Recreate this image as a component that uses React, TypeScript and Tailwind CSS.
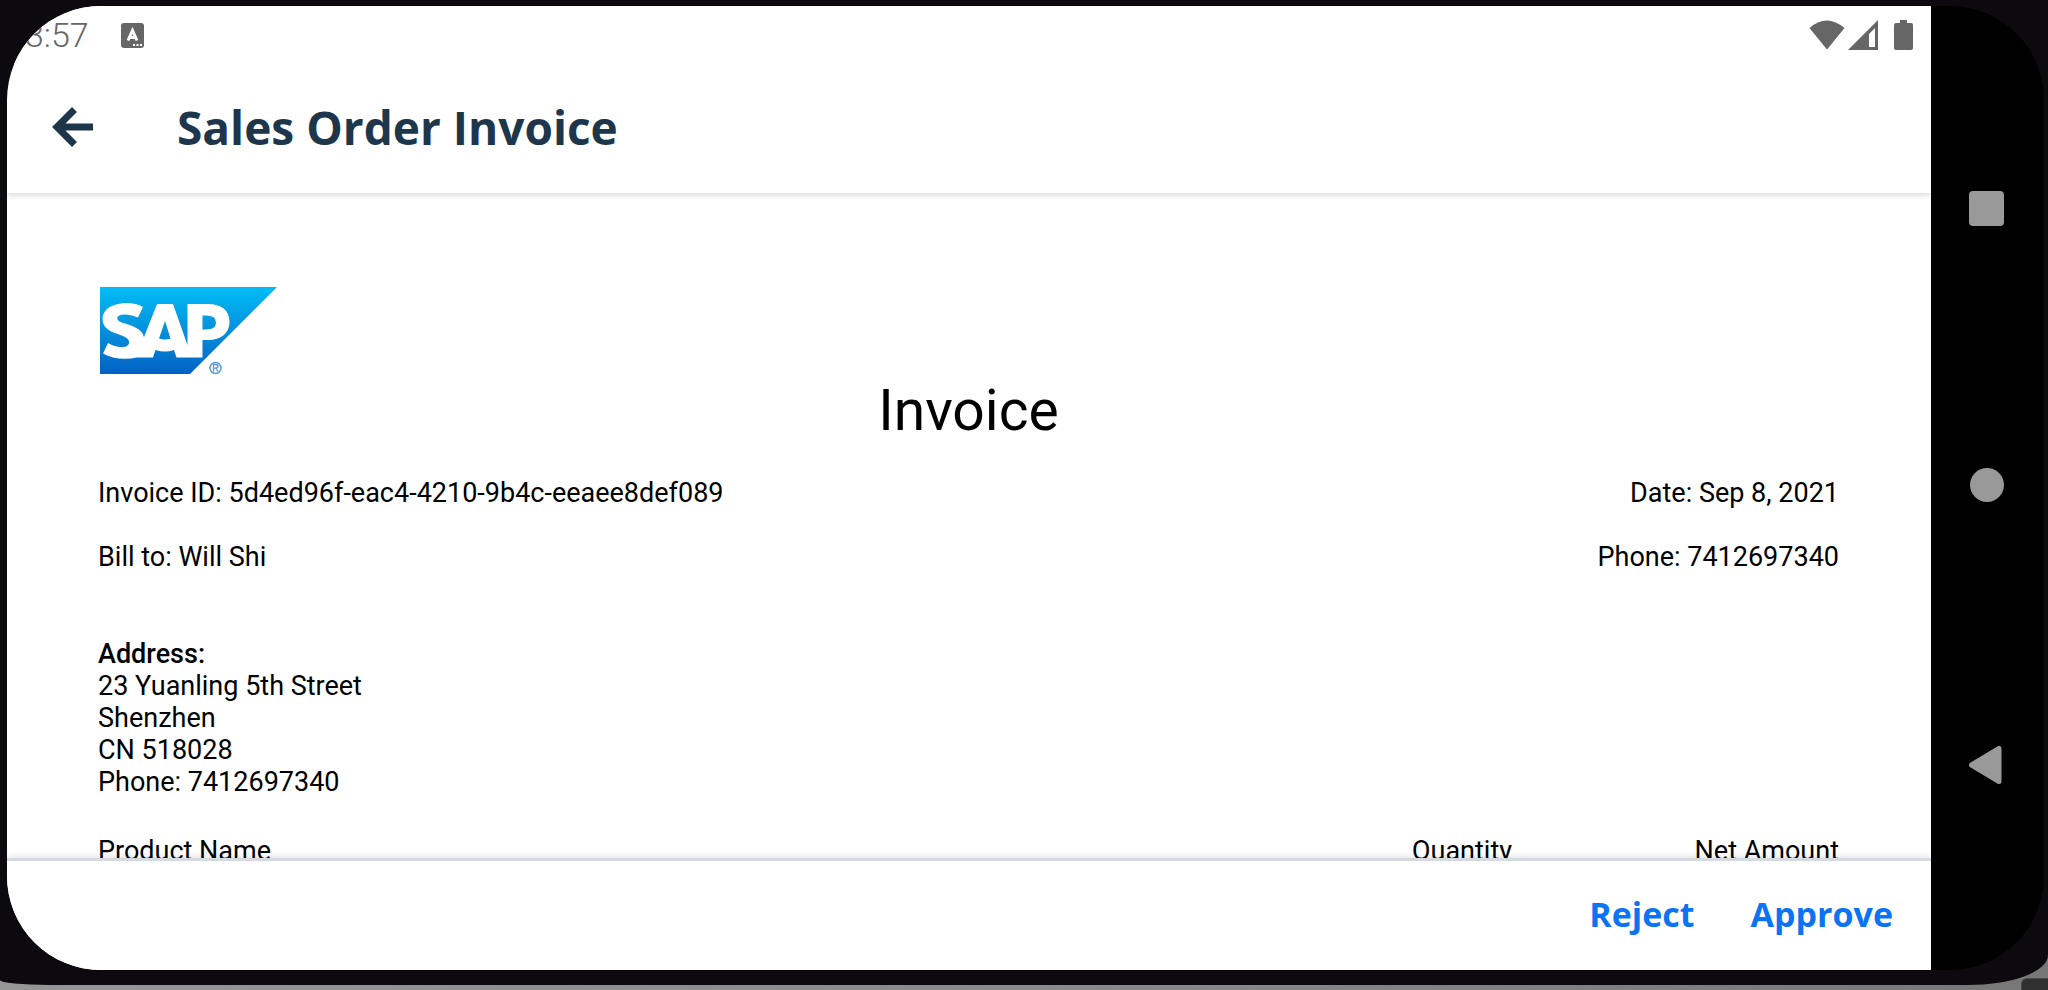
import React from "react";

const invoice = { id: "5d4ed96f-eac4-4210-9b4c-eeaee8def089" };

function StatusBar() {
  return (
    <div className="relative z-20 flex h-[58px] shrink-0 items-center bg-white px-[18px] text-[#666666]">
      <span className="text-[34px] leading-none font-light">3:57</span>
      <svg className="ml-8" width="23" height="25" viewBox="0 0 23 25" aria-hidden="true">
        <rect width="23" height="25" rx="3" fill="#666" />
        <path d="M7 17.500 11.500 7.500 16 17.500M8.600 14.500h5.800" fill="none" stroke="#fff" strokeWidth="3" />
        <path d="M12 21h2v2h-2zM15.500 21h2v2h-2zM19 21h2v2h-2z" fill="#fff" />
      </svg>
      <div className="ml-auto flex items-center">
        <svg width="36" height="30" viewBox="0 0 36 30" aria-hidden="true">
          <path d="M.5 8Q17.500-7 35.500 8L18 29.500z" fill="#666" />
        </svg>
        <svg className="ml-[3px]" width="30" height="30" viewBox="0 0 30 30" aria-hidden="true">
          <path fillRule="evenodd" d="M30 0v30H0zM27 8l-6 6v13h6z" fill="#666" />
        </svg>
        <svg className="ml-4" width="19" height="30" viewBox="0 0 19 30" aria-hidden="true">
          <path d="M6 0h7v3h4q2 0 2 2v23q0 2-2 2H2q-2 0-2-2V5q0-2 2-2h4z" fill="#666" />
        </svg>
      </div>
    </div>
  );
}

function SapLogo() {
  return (
    <svg className="ml-0.5" width="177" height="88" viewBox="0 0 177 88" role="img" aria-label="SAP">
      <defs>
        <linearGradient id="sap" x1="0" y1="0" x2="0" y2="1">
          <stop offset="0" stopColor="#00bdf7" />
          <stop offset="0.5" stopColor="#058fdc" />
          <stop offset="1" stopColor="#0362c4" />
        </linearGradient>
      </defs>
      <path d="M0 0h177L90 87H0z" fill="url(#sap)" />
      <path
        fillRule="evenodd"
        fill="#fff"
        d="M43 20C36 16 28 15.500 21 16.500C9 18 2.500 24 2.500 32C2.500 42 12 45 19 47.500C26 50 29.500 52 29 56C28 62 16 61 8 56L3 66.500C12 72 25 73 37 70.500H53L55.500 63Q65 66 74 63L76.500 70.500H102.500V53H108C121 53 129.500 46 129.500 35C129.500 23 121 17 108 17H87.500V58L73 17H57L44 50C42 42 33 39 25 36.500C19 35 16.500 33 17.500 30C19 26.500 29 26.500 38 30.500zM65 34L70.500 51.500Q65 53.500 59 51.500zM102.500 28.500H106Q116 28.500 116 35.500T106 42.500H102.500z"
      />
      <circle cx="115.500" cy="81" r="5.500" fill="none" stroke="#5b9bd8" strokeWidth="1.500" />
      <path d="M113.500 84.500v-7h2.500q2 0 2 1.800t-2 1.800h-2.500m2.500 0 2 3.400" fill="none" stroke="#5b9bd8" strokeWidth="1.300" />
    </svg>
  );
}

export default function App() {
  return (
    <div className="relative h-screen overflow-hidden bg-linear-to-r from-[#969696] via-[#8a8a8a] to-[#777777]">
      <div className="flex h-[calc(100%-5px)] rounded-br-[80px_30px] rounded-bl-[50px_5px] bg-[#0c0a0e] pt-[6px] pr-1 pb-[15px] pl-[7px] font-['Roboto',sans-serif]">
        <div className="flex min-w-0 flex-1 overflow-hidden rounded-[94px] bg-black">
          <main className="flex min-w-0 flex-1 flex-col bg-white text-black">
            <StatusBar />
            <header className="relative z-10 flex h-[129px] shrink-0 items-center pb-1 pl-[45px] shadow-[0_2px_6px_rgba(0,0,0,0.16)]">
              <button type="button" aria-label="Back" className="mr-[84px]">
                <svg width="41" height="40" viewBox="0 0 41 40" aria-hidden="true">
                  <path d="M22.500 2.500 5 20l17.500 17.500M5 20h36" fill="none" stroke="#1d364b" strokeWidth="7" />
                </svg>
              </button>
              <h1 className="font-['Open_Sans',sans-serif] text-[46px] leading-none font-bold text-[#1d364b]">Sales Order Invoice</h1>
            </header>
            <section className="min-h-0 flex-1 overflow-hidden pt-[94px] pr-[92px] pl-[91px] text-[27px] leading-8">
              <SapLogo />
              <h2 className="mt-1 text-center text-[57px] leading-[64px]">Invoice</h2>
              <div className="mt-[34px] flex justify-between">
                <p>Invoice ID: {invoice.id}</p>
                <p>Date: Sep 8, 2021</p>
              </div>
              <div className="mt-8 flex justify-between">
                <p>Bill to: Will Shi</p>
                <p>Phone: 7412697340</p>
              </div>
              <address className="mt-[65px] not-italic">
                <strong className="block font-medium">Address:</strong>
                23 Yuanling 5th Street<br />
                Shenzhen<br />
                CN 518028<br />
                Phone: 7412697340
              </address>
              <table className="mt-[37px] w-full">
                <thead>
                  <tr>
                    <th className="p-0 text-left font-normal">Product Name</th>
                    <th className="p-0 text-right font-normal">Quantity</th>
                    <th className="w-[327px] p-0 text-right font-normal">Net Amount</th>
                  </tr>
                </thead>
              </table>
            </section>
            <footer className="relative z-10 flex h-[112px] shrink-0 items-center justify-end gap-14 border-t-[3px] border-[#d5dae1] bg-white pr-[38px] pb-1 font-['Open_Sans',sans-serif] text-[34px] leading-none font-bold text-[#0a74f5] shadow-[0_-2px_6px_rgba(0,0,0,0.1)]">
              <button type="button">Reject</button>
              <button type="button">Approve</button>
            </footer>
          </main>
          <nav aria-label="System navigation" className="flex w-[113px] shrink-0 flex-col items-center justify-around py-16 pr-[2px]">
            <button type="button" aria-label="Recent apps" className="size-[35px] rounded bg-[#999999]" />
            <button type="button" aria-label="Home" className="size-[34px] rounded-full bg-[#999999]" />
            <button type="button" aria-label="Back">
              <svg width="36" height="40" viewBox="0 0 36 40" aria-hidden="true">
                <path d="M30 3.500v33L2.500 20z" fill="#999" stroke="#999" strokeWidth="5" strokeLinejoin="round" />
              </svg>
            </button>
          </nav>
        </div>
      </div>
      <div className="absolute right-0 bottom-0 h-3 w-[27px] rounded-tl-md border-t border-l border-[#4a4a4a] bg-[#303030]" />
    </div>
  );
}
